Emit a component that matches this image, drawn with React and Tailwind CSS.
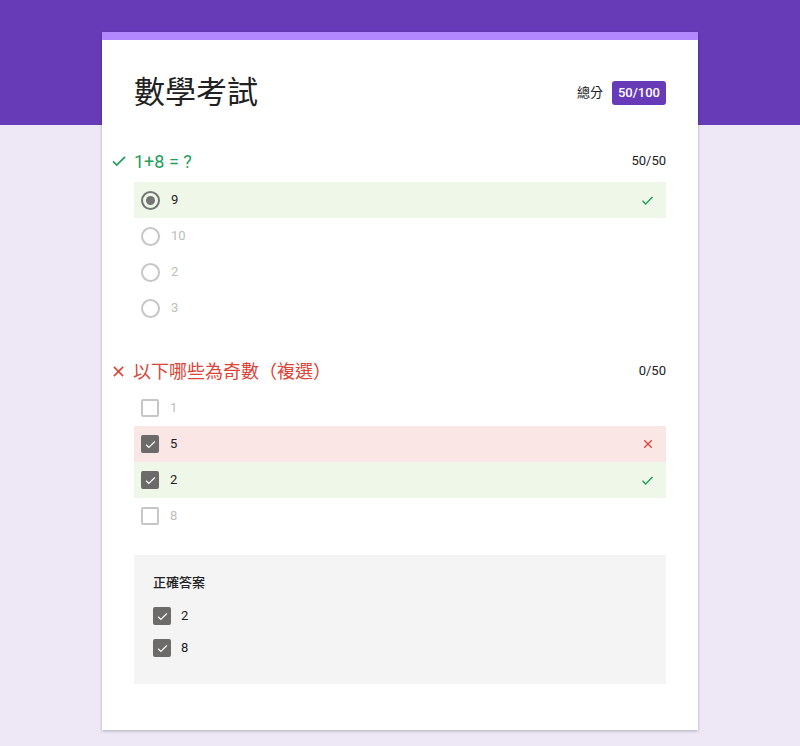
import React from 'react';

const font = { fontFamily: 'Roboto, "Noto Sans CJK TC", sans-serif' };

const Check = ({ className = '' }) => (
  <svg viewBox="0 0 24 24" className={className} fill="none" stroke="currentColor" strokeWidth="2.2">
    <path d="M4 12.5l5 5L20 6.5" />
  </svg>
);

const Cross = ({ className = '' }) => (
  <svg viewBox="0 0 24 24" className={className} fill="none" stroke="currentColor" strokeWidth="2.2">
    <path d="M5.5 5.5l13 13M18.5 5.5l-13 13" />
  </svg>
);

const Radio = ({ checked }) => (
  <div
    className={
      'w-[19px] h-[19px] rounded-full border-2 flex items-center justify-center ' +
      (checked ? 'border-[#757575]' : 'border-[#c6c6c6]')
    }
  >
    {checked && <div className="w-[9px] h-[9px] rounded-full bg-[#757575]" />}
  </div>
);

const Box = ({ checked }) =>
  checked ? (
    <div className="w-[18px] h-[18px] rounded-[2px] bg-[#6d6a6a] flex items-center justify-center">
      <Check className="w-[13px] h-[13px] text-white" />
    </div>
  ) : (
    <div className="w-[18px] h-[18px] rounded-[2px] border-2 border-[#c6c6c6]" />
  );

const Option = ({ type, label, checked, status }) => {
  let bg = '';
  if (status === 'right') bg = 'bg-[#eff7e8]';
  if (status === 'wrong') bg = 'bg-[#fae6e4]';
  return (
    <div className={'h-9 flex items-center pl-[7px] pr-[11px] ' + bg}>
      {type === 'radio' ? <Radio checked={checked} /> : <Box checked={checked} />}
      <span className={'ml-[11px] text-[13px] flex-1 ' + (checked ? 'text-[#202124]' : 'text-[#bdbdbd]')}>
        {label}
      </span>
      {status === 'right' && <Check className="w-[15px] h-[15px] text-[#1e9e5a]" />}
      {status === 'wrong' && <Cross className="w-[14px] h-[14px] text-[#db4437]" />}
    </div>
  );
};

const QuestionHeader = ({ ok, title, score }) => (
  <div className="h-6 flex items-center -ml-6">
    {ok ? (
      <Check className="w-[18px] h-[18px] text-[#1e9e5a]" />
    ) : (
      <Cross className="w-[17px] h-[17px] text-[#db4437]" />
    )}
    <span className={'ml-[6px] text-[18px] flex-1 ' + (ok ? 'text-[#1e9e5a]' : 'text-[#db4437]')}>
      {title}
    </span>
    <span className="text-[13px] text-[#202124]">{score}</span>
  </div>
);

export default function App() {
  return (
    <div
      className="min-h-[746px] bg-[linear-gradient(#673ab7_0_125px,#ede7f6_125px)] pt-[32px] pb-4"
      style={font}
    >
      <div className="ml-[102px] w-[596px] bg-white border-t-8 border-[#b388ff] shadow-[0_1px_3px_rgba(0,0,0,0.25)] px-8 pt-[33px] pb-[46px]">
        <div className="h-10 flex items-center">
          <h1 className="flex-1 text-[31px] text-[#212121]">數學考試</h1>
          <span className="text-[13px] text-[#202124] mr-[9px]">總分</span>
          <span className="h-6 px-[6px] flex items-center rounded-[3px] bg-[#673ab7] text-white text-[13px] font-medium">
            50/100
          </span>
        </div>

        <div className="mt-9">
          <QuestionHeader ok title="1+8 = ?" score="50/50" />
          <div className="mt-[9px]">
            <Option type="radio" label="9" checked status="right" />
            <Option type="radio" label="10" />
            <Option type="radio" label="2" />
            <Option type="radio" label="3" />
          </div>
        </div>

        <div className="mt-[33px]">
          <QuestionHeader title="以下哪些為奇數（複選）" score="0/50" />
          <div className="mt-[7px]">
            <Option type="box" label="1" />
            <Option type="box" label="5" checked status="wrong" />
            <Option type="box" label="2" checked status="right" />
            <Option type="box" label="8" />
          </div>
        </div>

        <div className="mt-[21px] bg-[#f4f4f4] pl-[19px] pt-[18px] pb-5">
          <div className="text-[13px] leading-5 font-medium text-[#202124]">正確答案</div>
          <div className="mt-[7px]">
            <div className="h-8 flex items-center">
              <Box checked />
              <span className="ml-[10px] text-[13px] text-[#202124]">2</span>
            </div>
            <div className="h-8 flex items-center">
              <Box checked />
              <span className="ml-[10px] text-[13px] text-[#202124]">8</span>
            </div>
          </div>
        </div>
      </div>
    </div>
  );
}
